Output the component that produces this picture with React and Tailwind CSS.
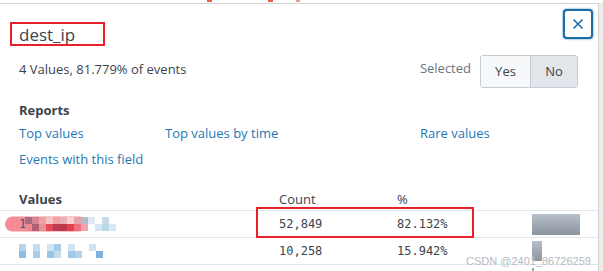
const row1Top = ["#a86b7e", "#d58593", "#f2a2a6", "#f9c2c5", "#f3a0a5", "#e8b0b8", "#f8d0d4", "#e8a2ac", "#b8b8cc", "#dce8f2", "#ffffff", "#c6dcec", "#ffffff"];
const row1Bot = ["#f08890", "#b06070", "#e89098", "#e84858", "#b84050", "#c03848", "#e84050", "#f07080", "#f6a0a8", "#ffffff", "#d6e6f2", "#bcd6ea", "#d8e8f4"];
const row2Top = ["#b8d4ea", "#ffffff", "#c4dcee", "#ffffff", "#d0e4f2", "#a8cce6", "#ffffff", "#d0e4f2", "#ffffff", "#ffffff", "#cfe2f1", "#ffffff"];
const row2Bot = ["#8fbce0", "#ffffff", "#a9cce8", "#ffffff", "#9ac4e4", "#c6dced", "#ffffff", "#a2c8e6", "#b4d2ea", "#ffffff", "#ffffff", "#7fb2dc"];

function Pixels({ top, bottom }) {
  return (
    <div className="flex flex-col">
      <div className="flex">{top.map((c, i) => <span key={i} className="block h-[7px] w-[7px]" style={{ background: c }} />)}</div>
      <div className="flex">{bottom.map((c, i) => <span key={i} className="block h-[7px] w-[7px]" style={{ background: c }} />)}</div>
    </div>
  );
}

export default function App() {
  return (
    <div className="relative h-[271px] w-[603px] overflow-hidden bg-[#ececec] text-[#3c444d]" style={{ fontFamily: "'Open Sans', Lato, sans-serif" }}>
      <div className="flex h-[3px] bg-white">
        <span className="ml-[207px] h-[2px] w-[5px] bg-[#e85a4f]" />
        <span className="ml-[56px] h-[2px] w-[5px] bg-[#e85a4f]" />
        <span className="ml-[23px] h-[2px] w-[4px] bg-[#e89a8f]" />
      </div>
      <div className="relative h-[268px] w-[599px] border-r border-t border-[#d3d3d3] bg-white">
        {/* header */}
        <div className="flex h-[44px] items-end pl-[19px]">
          <div className="relative pb-[3px] text-[17px] font-medium leading-[20px]">
            dest_ip
            <div className="absolute -left-[9px] -top-[3px] h-[24px] w-[95px] border-2 border-[#e8202a]" />
          </div>
        </div>
        <button className="absolute right-[5px] top-[5px] flex h-[30px] w-[30px] items-center justify-center rounded-[4px] border-2 border-[#1a6ea8] bg-white shadow-[0_0_2px_#1a6ea8]">
          <svg width="12" height="12" viewBox="0 0 12 12"><path d="M1.5 1.5l9 9M10.5 1.5l-9 9" stroke="#1a6ea8" strokeWidth="1.6" fill="none" /></svg>
        </button>

        {/* summary row */}
        <div className="mt-[7px] flex h-[33px] items-center justify-between pl-[19px] pr-[20px]">
          <div className="mt-[-3px] text-[13px]">4 Values, 81.779% of events</div>
          <div className="flex items-center">
            <span className="mr-[9px] mt-[-6px] text-[13px] text-[#6b7480]">Selected</span>
            <div className="flex h-[33px] overflow-hidden rounded-[3px] border border-[#c3cbd4] text-[13px]">
              <span className="flex w-[50px] items-center justify-center border-r border-[#c3cbd4] bg-[#f7f8fa]">Yes</span>
              <span className="flex w-[46px] items-center justify-center bg-[#e1e6eb]">No</span>
            </div>
          </div>
        </div>

        {/* reports */}
        <div className="mt-[14px] pl-[19px] text-[13px]">
          <div className="font-bold leading-[16px]">Reports</div>
          <div className="mt-[7px] flex leading-[16px] text-[#1f78b4]">
            <span className="w-[146px]">Top values</span>
            <span className="w-[255px]">Top values by time</span>
            <span>Rare values</span>
          </div>
          <div className="mt-[10px] leading-[16px] text-[#1f78b4]">Events with this field</div>
        </div>

        {/* table */}
        <div className="mt-[23px] text-[13px]">
          <div className="flex h-[21px] items-start border-b border-[#e1e6eb] pl-[19px]">
            <span className="w-[260px] font-bold">Values</span>
            <span className="w-[118px]">Count</span>
            <span>%</span>
          </div>
          <div className="relative flex h-[27px] items-center border-b border-[#e1e6eb] pl-[19px]" style={{ fontFamily: "'DejaVu Sans Mono', monospace" }}>
            <div className="relative flex w-[260px] items-center">
              <div className="absolute -left-[14px] top-1/2 h-[15px] w-[82px] -translate-y-1/2 rounded-full bg-[#f48c94]" />
              <span className="relative text-[12px] text-[#2b5f8a]">1</span>
              <div className="relative ml-[-1px]"><Pixels top={row1Top} bottom={row1Bot} /></div>
            </div>
            <span className="w-[118px] text-[12px]">52,849</span>
            <span className="w-[135px] text-[12px]">82.132%</span>
            <div className="h-[21px] w-[48px] bg-gradient-to-b from-[#b8c0ca] to-[#8a939e]" />
            <div className="absolute left-[256px] top-[-4px] h-[31px] w-[218px] border-2 border-[#e8202a]" />
          </div>
          <div className="flex h-[27px] items-center border-b border-[#e1e6eb] pl-[19px]" style={{ fontFamily: "'DejaVu Sans Mono', monospace" }}>
            <div className="w-[260px]"><Pixels top={row2Top} bottom={row2Bot} /></div>
            <span className="w-[118px] text-[12px]">10,258</span>
            <span className="w-[135px] text-[12px]">15.942%</span>
            <div className="h-[20px] w-[10px] bg-gradient-to-b from-[#b8c0ca] to-[#8a939e]" />
          </div>
          <div className="ml-[532px] mt-[3px] h-[6px] w-[2px] bg-[#9aa2ac]" />
        </div>

        <div className="absolute left-[466px] top-[249px] whitespace-nowrap text-[11px] leading-[16px] text-[#b4bac2] [text-shadow:0_0_2px_#fff]" style={{ fontFamily: "'Liberation Sans', sans-serif" }}>CSDN @2401_86726259</div>
      </div>
    </div>
  );
}
